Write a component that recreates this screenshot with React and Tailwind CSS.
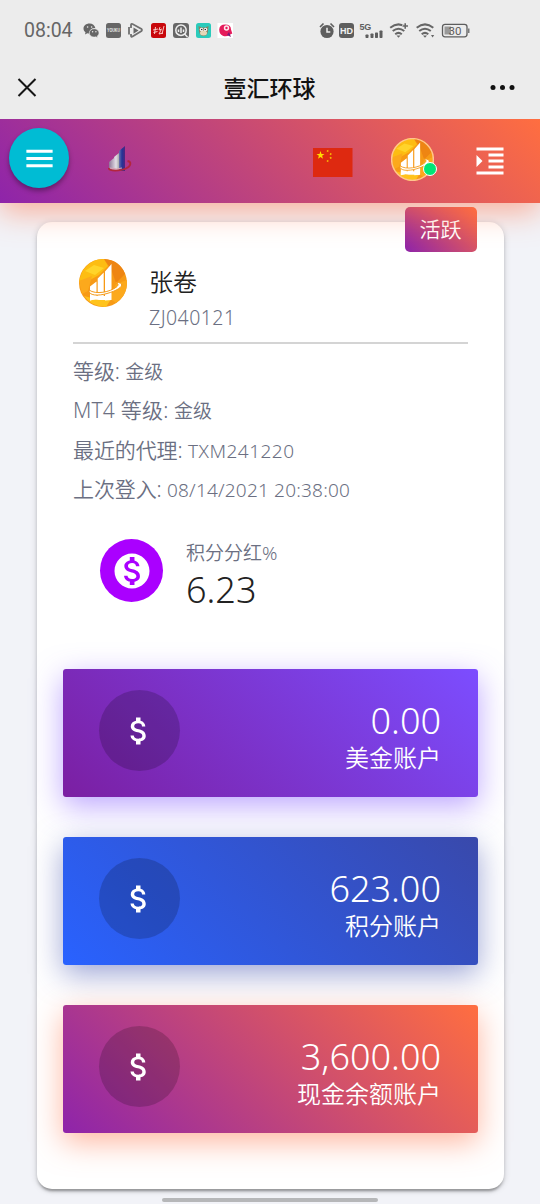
import React from "react";
import { MdAttachMoney, MdMonetizationOn, MdMenu, MdFormatIndentIncrease } from "react-icons/md";

function StatusIcons() {
  return (
    <svg className="ml-[11px] block" width="154" height="18" viewBox="0 0 154 18">
      {/* chat bubbles */}
      <g fill="#666">
        <path d="M6.5 1.5C3 1.500.5 3.800.5 6.500c0 1.600.8 2.900 2 3.800L2 12.500l2.400-1.300c.7.200 1.400.3 2.100.3-.3-3.600 2.600-5.400 5.800-5.400C11.800 3.400 9.500 1.500 6.500 1.500z" />
        <path d="M11.200 6.700c-2.800 0-4.900 1.900-4.900 4.200s2.100 4.200 4.900 4.200c.6 0 1.200-.1 1.700-.3l1.900 1-.5-1.800c1-.8 1.700-1.900 1.700-3.100 0-2.300-2.100-4.200-4.800-4.200z" stroke="#ececec" strokeWidth=".6" />
      </g>
      <g fill="#ececec">
        <circle cx="4.600" cy="5" r=".8" /><circle cx="8.600" cy="5" r=".8" />
        <circle cx="9.600" cy="9.800" r=".7" /><circle cx="12.900" cy="9.800" r=".7" />
      </g>
      <rect x="23" y="1" width="15" height="15" rx="2.500" fill="#666" />
      <text x="30.500" y="10.200" fontSize="4.800" textLength="13" lengthAdjust="spacingAndGlyphs" fontWeight="700" fill="#eee" textAnchor="middle" fontFamily="Liberation Sans, sans-serif">YOUKU</text>
      <path d="M48 6V3q0-1.500 1.500-1l9 5q1 1 0 2l-9 5.500Q48 15.500 48 13.500V12M46 5v7.500" fill="none" stroke="#707070" strokeWidth="1.800" />
      <path d="M50.500 5.500l5 3-5 3.200z" fill="#666" />
      <rect x="68" y="1" width="15" height="15" rx="2.500" fill="#c8070b" />
      <path d="M70 8l5-1M72.500 5l-1 7M70.500 10.500l4-1M77 5l-1 3 3-1M78 8l-2 4 4-1M81 4l-2 8" stroke="#ffd8d4" fill="none" strokeWidth=".9" />
      <rect x="90" y="1" width="16" height="15" rx="3" fill="#666" />
      <circle cx="98" cy="8.200" r="5.200" fill="none" stroke="#eee" strokeWidth="1.500" />
      <path d="M101.500 12l3 3M95.500 7.500v2.500M98 5.500V11M100.500 7.500v2.500" stroke="#eee" strokeWidth="1.500" />
      <rect x="113" y="1" width="15" height="15" rx="2.500" fill="#2acbbb" />
      <path d="M115.500 4l3 1.500h4l3-1.500-.5 5.500q-1 4.500-4.500 4.500t-4.500-4.500z" fill="#8b8264" />
      <ellipse cx="120.500" cy="11" rx="3.500" ry="2.500" fill="#e4d8b8" />
      <circle cx="118.500" cy="7.500" r="1.700" fill="#fff" /><circle cx="122.500" cy="7.500" r="1.700" fill="#fff" />
      <circle cx="118.700" cy="7.500" r=".8" fill="#222" /><circle cx="122.300" cy="7.500" r=".8" fill="#222" />
      <rect x="134.500" y="1" width="15.500" height="15" fill="#fff" />
      <path d="M136.200 7.500q.3-5 6-5t5.800 5l1.300 4-3 1.500q-3 2-6.500.7-3.500-1.500-3.600-6.200z" fill="#e51b5b" />
      <circle cx="143.500" cy="6" r="2.700" fill="#ffe9ee" /><circle cx="143.500" cy="6" r="1.200" fill="#e51b5b" />
      <path d="M146 10l2 5-4-2z" fill="#7b1b79" />
    </svg>
  );
}

function SystemIcons() {
  return (
    <svg className="block" width="152" height="18" viewBox="0 0 152 18">
      <g fill="#5e5e5e">
        <circle cx="8" cy="9.500" r="6.600" />
        <path d="M1 5L4.500 1.500M15 5l-3.500-3.500" stroke="#5e5e5e" strokeWidth="1.600" />
        <rect x="20" y="1" width="15" height="15" rx="3" />
        <text x="27.500" y="12" fontSize="9" fontWeight="700" fill="#f2f2f2" textAnchor="middle" fontFamily="Liberation Sans, sans-serif">HD</text>
        <text x="40.500" y="7.500" fontSize="9" fontWeight="700" letterSpacing="-.2" fontFamily="Liberation Sans, sans-serif">5G</text>
        <rect x="46.500" y="12.500" width="3" height="3.500" rx=".7" />
        <rect x="51.500" y="11.500" width="3" height="4.500" rx=".7" />
        <rect x="56" y="10.500" width="3" height="5.500" rx=".7" />
        <rect x="60.500" y="8.500" width="3" height="7.500" rx=".7" />
      </g>
      <path d="M8 5.800V10h3.300" stroke="#eee" strokeWidth="1.500" fill="none" />
      {[79.500, 106].map((x) => (
        <g key={x} transform={`translate(${x} 0)`} fill="none" stroke="#666" strokeWidth="2">
          <path d="M-8.300 5.700q8.300-6.700 16.600 0M-5.800 9q5.800-4.600 11.600 0M-3.300 12.200q3.300-2.600 6.600 0" />
          <path d="M-2 13.500h4L0 15.800z" fill="#666" stroke="none" />
        </g>
      ))}
      <path d="M83 4h7M86.500 1v7" stroke="#ececec" strokeWidth="3" />
      <path d="M83.500 4h5.500M86.200 1.300v5.500" stroke="#666" strokeWidth="1.600" />
      <path d="M112 13h3.200l-1.600 2.500z" fill="#666" />
      <rect x="123.500" y="2.300" width="24.500" height="12.500" rx="2.500" fill="none" stroke="#5d5d5d" strokeWidth="1.300" />
      <path d="M149.800 6.500v4.500" stroke="#5d5d5d" strokeWidth="1.200" />
      <rect x="125.500" y="4.500" width="6.500" height="8" fill="#999" />
      <text x="136" y="12.700" fontSize="11.500" fontWeight="400" fill="#5d5d5d" textAnchor="middle" fontFamily="Roboto, sans-serif">30</text>
    </svg>
  );
}

function GoldLogo({ size, ring }) {
  return (
    <svg className="block" width={size} height={size} viewBox="0 0 48 48">
      <circle cx="24" cy="24" r="24" fill="#f79a16" />
      <path d="M3 13Q11 0 25 0l4 7-9 9-9 5-11 1z" fill="#fdbd12" />
      <path d="M6 12l9-6 10 3-9 7z" fill="#ffd42a" />
      <path d="M25 0q16 1 21 15l-9 9-5-14z" fill="#ee8512" />
      <path d="M0 22l13-5-4 15-6 3zM37 25l11-4q1 15-11 23l-7-5z" fill="#fca91c" />
      <path d="M5 37l15 4 12-1-5 8Q13 48 5 37z" fill="#ffc31c" />
      <g fill="#fff">
        <path d="M11 27.500l6.500-5V40L11 41.500zM18.700 19.500l6-6v26h-6zM26 12.500l6.500-7.500V41L26 41.500z" />
        <path d="M11 37v4.500q4-1.500 9-.5h12V37z" />
      </g>
      <path d="M10 31c-1 6 10 6 18 3.500C37 32 44 28 42.500 25c-1-1.500-4.500-1.800-7-1.500 4 .2 4.500 2.500 2 4.500C31 33 17 36 10 31z" fill="#fff" stroke="#f49a19" strokeWidth="1" />
      {ring && <circle cx="24" cy="24" r="23.300" fill="none" stroke="#ffc48f" strokeWidth="1.600" />}
    </svg>
  );
}

function BrandLogo() {
  return (
    <svg className="ml-[38px] mt-[26px] block" width="26" height="28" viewBox="0 0 26 28">
      <defs>
        <linearGradient id="silver" x1="0" x2="1"><stop stopColor="#8e7597" /><stop offset=".7" stopColor="#e4dfe6" /><stop offset="1" stopColor="#aaa" /></linearGradient>
        <linearGradient id="navy" x1="0" x2="1"><stop stopColor="#6b70ae" /><stop offset=".5" stopColor="#243397" /><stop offset="1" stopColor="#4d2680" /></linearGradient>
      </defs>
      <path d="M2 17l5-4v12H2zM7 12l5-4v17H7z" fill="url(#silver)" />
      <path d="M12 6l6-5v25h-6z" fill="url(#navy)" />
      <path d="M2 23c-1 3.500 12 3 17 .5 5-2.500 6-6.500 1.500-7.500" fill="none" stroke="#b3263d" strokeWidth="1.800" />
      <path d="M3 23q7 2 12 0" fill="none" stroke="#d8a4b4" strokeWidth="1" />
    </svg>
  );
}

const star = "M0-4.200L1-1.300 4-1.300 1.600.5 2.500 3.400 0 1.600-2.500 3.400-1.600.5-4-1.300-1-1.300z";

function Flag() {
  return (
    <svg className="ml-[180px] mt-[29px] block" width="40" height="29" viewBox="0 0 40 29">
      <rect width="39.500" height="29" fill="#de2910" />
      <g fill="#ffde00">
        <path d={star} transform="translate(7.500 7.300)" />
        <path d={star} transform="translate(14.700 3) scale(.33) rotate(20)" />
        <path d={star} transform="translate(17.700 6) scale(.33) rotate(40)" />
        <path d={star} transform="translate(17.700 10) scale(.33)" />
        <path d={star} transform="translate(14.700 13) scale(.33) rotate(20)" />
      </g>
    </svg>
  );
}

function Detail({ label, value, labelTrack = "tracking-[-0.1px]", track = "" }) {
  return (
    <div className="flex h-[39.500px] items-baseline whitespace-pre text-[21px] leading-[39.500px] text-[#6b6f82]">
      <span className={labelTrack}>{label}: </span>
      <span className={`text-[19px] ${track}`}>{value}</span>
    </div>
  );
}

function Account({ amount, name, tone }) {
  return (
    <section className={`flex h-[127.500px] items-start justify-between rounded-[3px] pl-9 pr-[37px] text-white ${tone}`}>
      <div className="mt-[21px] flex size-[81px] items-center justify-center rounded-full bg-black/18">
        <MdAttachMoney size={36} className="-ml-[2px]" />
      </div>
      <div className="mt-[30px] flex flex-col items-end">
        <div className="h-[43px] text-[36px] leading-[43px]">{amount}</div>
        <div className="h-[31px] text-[24px] leading-[31px]">{name}</div>
      </div>
    </section>
  );
}

export default function App() {
  return (
    <div className="flex h-[1204px] w-[540px] flex-col overflow-hidden bg-[#f2f3f8] font-['Noto_Sans','Noto_Sans_CJK_SC',sans-serif] font-[350]">
      <div className="flex h-[119px] shrink-0 flex-col bg-[#ececec]">
        <div className="flex h-[60px] items-center justify-between pl-6 pr-[69px] pt-px">
          <div className="flex items-center">
            <span className="w-[48px] whitespace-nowrap font-['Roboto'] text-[19.500px] font-normal leading-6 text-[#666]">08:04</span>
            <StatusIcons />
          </div>
          <SystemIcons />
        </div>
        <div className="flex h-[56px] items-center justify-between pl-[17px] pr-6">
          <svg width="46" height="20" viewBox="0 0 46 20"><path d="M1.500 1l17 17M18.500 1l-17 17" stroke="#161616" strokeWidth="2" /></svg>
          <h1 className="text-[23px] font-medium leading-8 text-[#111]">壹汇环球</h1>
          <svg width="40" height="6" viewBox="0 0 40 6" fill="#111"><circle cx="17" cy="2.500" r="2.500" /><circle cx="26.500" cy="2.500" r="2.500" /><circle cx="36" cy="2.500" r="2.500" /></svg>
        </div>
      </div>

      <header className="relative z-10 flex h-[84px] shrink-0 items-start bg-linear-[45deg,#8e24aa,#ff6e40] shadow-[0_9px_30px_0_rgba(255,110,64,0.5)] [clip-path:inset(0_0_-60px_0)]">
        <button className="ml-[9px] mt-[9px] flex size-[60px] items-center justify-center rounded-full bg-[#00bcd4] text-white shadow-[0_3px_5px_rgba(0,0,0,0.35)]">
          <MdMenu size={35} />
        </button>
        <BrandLogo />
        <Flag />
        <div className="relative ml-[38px] mt-[19px] size-[43px]">
          <GoldLogo size={43} ring />
          <span className="absolute left-[32px] top-[24px] size-[14px] rounded-full border border-white bg-[#00e676]" />
        </div>
        <MdFormatIndentIncrease size={36} className="ml-[38px] mt-6 text-white" />
      </header>

      <main className="relative ml-[37px] mt-[19px] h-[967px] w-[467px] shrink-0 rounded-[15px] bg-white px-[26px] shadow-[0_3px_3px_0_rgba(0,0,0,0.14),0_4px_2px_-2px_rgba(0,0,0,0.2),0_1px_7px_0_rgba(0,0,0,0.16)]">
        <span className="absolute -top-[15px] left-[368px] flex h-[45px] w-[72px] items-center justify-center rounded-[5px] bg-linear-[45deg,#8e24aa,#ff6e40] pr-px text-[21px] leading-none text-white">活跃</span>
        <div className="mx-[10px] flex h-[122px] border-b-2 border-[#d4d4d4] pl-[6px] pt-[37px]">
          <GoldLogo size={48} />
          <div className="ml-[22px] flex flex-col">
            <div className="h-[44px] text-[24px] leading-[45px] text-[#222]">张卷</div>
            <div className="h-[28px] text-[19.500px] leading-[29px] tracking-[0.45px] text-[#6b6f82]">ZJ040121</div>
          </div>
        </div>
        <div className="mx-[10px] mt-[7.500px] flex flex-col">
          <Detail label="等级" value="金级" />
          <Detail label="MT4 等级" value="金级" labelTrack="tracking-[0.2px]" />
          <Detail label="最近的代理" value="TXM241220" track="tracking-[0.5px]" />
          <Detail label="上次登入" value="08/14/2021 20:38:00" track="tracking-[0.200px]" />
        </div>
        <div className="ml-[37px] mt-[22.500px] flex h-[96px]">
          <div className="mt-[7px] flex size-[63px] shrink-0 items-center justify-center rounded-full bg-[#aa00ff] text-white">
            <MdMonetizationOn size={42} />
          </div>
          <div className="ml-[23px] flex flex-col">
            <div className="h-[42px] text-[19px] leading-[42px] text-[#6b6f82]">积分分红%</div>
            <div className="h-[31px] text-[36px] leading-[31px] text-[#222]">6.23</div>
          </div>
        </div>
        <div className="mt-[41px] flex flex-col gap-[40.500px]">
          <Account amount="0.00" name="美金账户" tone="bg-linear-[45deg,#7b1fa2,#7c4dff] shadow-[0_9px_30px_0_rgba(124,77,255,0.5)]" />
          <Account amount="623.00" name="积分账户" tone="bg-linear-[45deg,#2962ff,#3949ab] shadow-[0_9px_30px_0_rgba(57,73,171,0.5)]" />
          <Account amount="3,600.00" name="现金余额账户" tone="bg-linear-[45deg,#8e24aa,#ff6e40] shadow-[0_9px_30px_0_rgba(255,110,64,0.5)]" />
        </div>
      </main>
      <div className="mx-auto mt-[9px] h-1 w-[216px] shrink-0 rounded-full bg-[#b6b7b9]" />
    </div>
  );
}
